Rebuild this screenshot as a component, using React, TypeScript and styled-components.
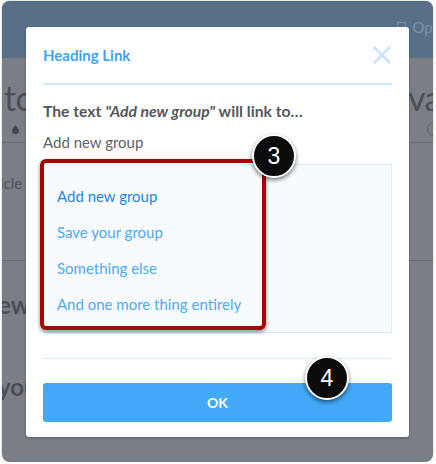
import React from "react";
import styled, { createGlobalStyle } from "styled-components";

const GlobalStyle = createGlobalStyle`
  html, body {
    margin: 0;
    padding: 0;
    background: #ffffff;
  }
  body {
    font-family: Lato, "Open Sans", sans-serif;
  }
`;

const Frame = styled.div`
  position: relative;
  margin: 1px 0 0 2px;
  width: 431px;
  height: 461px;
  border-radius: 8px;
  overflow: hidden;
  background: #7b7e87;
  box-shadow: 0 0 2px rgba(0, 0, 0, 0.35);
`;

const TopBar = styled.div`
  height: 57px;
  background: #577088;
  display: flex;
  justify-content: flex-end;
  align-items: flex-start;
  padding-top: 17px;
  box-sizing: border-box;
  color: #7a92a9;
  font-size: 15px;
  gap: 6px;
`;

const SquareIcon = styled.span`
  display: inline-block;
  width: 7px;
  height: 8px;
  margin-top: 4px;
  border: 1.5px solid #7a92a9;
  border-radius: 1px;
`;

const OpenText = styled.span`
  margin-right: -16px;
`;

const Page = styled.div`
  display: flex;
  flex-direction: column;
  color: #4b4e55;
`;

const TitleRow = styled.div`
  display: flex;
  justify-content: space-between;
  padding: 22px 0 0 0;
  font-size: 34px;
  line-height: 36px;
  letter-spacing: -0.5px;
`;

const TitleLeft = styled.span`
  margin-left: 2px;
`;

const TitleRight = styled.span`
  margin-right: -8px;
`;

const MetaRow = styled.div`
  display: flex;
  justify-content: space-between;
  align-items: center;
  height: 26px;
  padding: 0 0 0 10px;
  border-bottom: 1px solid #676a71;
`;

const ClockStub = styled.span`
  width: 12px;
  height: 12px;
  border: 1.5px solid #5f6269;
  border-radius: 50%;
  margin-right: -8px;
`;

const Section = styled.div<{ $h: number }>`
  height: ${(p) => p.$h}px;
  box-sizing: border-box;
  border-bottom: 1px solid #676a71;
  padding-top: 31px;
  font-size: 15px;
  color: #50535a;
`;

const Clipped = styled.span`
  margin-left: -2px;
`;

const BoldLine = styled.div<{ $top: number }>`
  margin-top: ${(p) => p.$top}px;
  font-size: 24px;
  font-weight: 700;
  line-height: 28px;
  margin-left: -4px;
`;

const Overlay = styled.div`
  position: absolute;
  left: 24px;
  top: 26px;
  width: 383px;
  background: #ffffff;
  border-radius: 3px;
  box-shadow: 0 1px 3px rgba(0, 0, 0, 0.25);
  padding: 0 17px 15px;
  box-sizing: border-box;
`;

const ModalHeader = styled.div`
  height: 58px;
  display: flex;
  align-items: center;
  justify-content: space-between;
  border-bottom: 2px solid #d3e9fc;
  box-sizing: border-box;
`;

const ModalTitle = styled.h2`
  margin: 0;
  font-size: 15px;
  font-weight: 700;
  color: #3fa3f3;
`;

const CloseBtn = styled.button`
  border: 0;
  background: none;
  padding: 0;
  width: 18px;
  height: 18px;
  display: flex;
  margin-right: 1px;
  cursor: pointer;
`;

const Prompt = styled.p`
  margin: 16px 0 0;
  font-size: 15.7px;
  line-height: 20px;
  font-weight: 700;
  color: #54575e;
`;

const Label = styled.div`
  margin-top: 11px;
  font-size: 15px;
  line-height: 20px;
  color: #5f6268;
`;

const ListBox = styled.ul`
  list-style: none;
  margin: 12px 0 0;
  padding: 13px 13px 12px;
  height: 169px;
  box-sizing: border-box;
  border: 1px solid #d8ecfc;
  border-radius: 2px;
  background: #f7fbfe;
`;

const Option = styled.li<{ $active?: boolean }>`
  height: 36px;
  line-height: 36px;
  font-size: 15px;
  color: ${(p) => (p.$active ? "#1c86e0" : "#4faaf4")};
`;

const Rule = styled.hr`
  margin: 25px 0 0;
  border: 0;
  border-top: 1px solid #d8ecfc;
`;

const OkButton = styled.button`
  margin-top: 24px;
  width: 100%;
  height: 39px;
  border: 0;
  border-radius: 3px;
  background: #42a8f8;
  color: #ffffff;
  font-family: Lato, "Open Sans", sans-serif;
  font-size: 14px;
  font-weight: 700;
  cursor: pointer;
`;

const Highlight = styled.div`
  position: absolute;
  left: 14px;
  top: 132px;
  width: 226px;
  height: 171px;
  box-sizing: border-box;
  border: 4px solid #a80202;
  border-radius: 6px;
  box-shadow: 0 2px 4px rgba(0, 0, 0, 0.45);
`;

const Badge = styled.div<{ $x: number; $y: number }>`
  position: absolute;
  left: ${(p) => p.$x}px;
  top: ${(p) => p.$y}px;
  width: 44px;
  height: 44px;
  box-sizing: border-box;
  border-radius: 50%;
  background: #0c0c0c;
  border: 2.5px solid #ffffff;
  box-shadow: 0 2px 4px rgba(0, 0, 0, 0.55);
  color: #ffffff;
  font-family: "Liberation Sans", Arial, sans-serif;
  font-size: 23px;
  display: flex;
  align-items: center;
  justify-content: center;
`;

const options = [
  "Add new group",
  "Save your group",
  "Something else",
  "And one more thing entirely",
];

const App = () => {
  return (
    <>
      <GlobalStyle />
      <Frame>
        <TopBar>
          <SquareIcon />
          <OpenText>Open</OpenText>
        </TopBar>
        <Page>
          <TitleRow>
            <TitleLeft>to</TitleLeft>
            <TitleRight>va</TitleRight>
          </TitleRow>
          <MetaRow>
            <svg width="7" height="10" viewBox="0 0 7 10">
              <path d="M3.5 0 C3.5 2 0 5 0 6.5 A3.5 3.5 0 0 0 7 6.5 C7 5 3.5 2 3.5 0 Z" fill="#44474e" />
            </svg>
            <ClockStub />
          </MetaRow>
          <Section $h={118}>
            <Clipped>icle</Clipped>
          </Section>
          <BoldLine $top={30}>ew</BoldLine>
          <BoldLine $top={54}>you</BoldLine>
        </Page>

        <Overlay>
          <ModalHeader>
            <ModalTitle>Heading Link</ModalTitle>
            <CloseBtn aria-label="Close">
              <svg width="18" height="18" viewBox="0 0 18 18">
                <path d="M2 2 L16 16 M16 2 L2 16" stroke="#cde5fa" strokeWidth="3" strokeLinecap="square" />
              </svg>
            </CloseBtn>
          </ModalHeader>
          <Prompt>
            The text <em>"Add new group"</em> will link to…
          </Prompt>
          <Label>Add new group</Label>
          <ListBox>
            {options.map((o, i) => (
              <Option key={o} $active={i === 0}>
                {o}
              </Option>
            ))}
          </ListBox>
          <Rule />
          <OkButton>OK</OkButton>
          <Highlight />
        </Overlay>

        <Badge $x={250} $y={133}>3</Badge>
        <Badge $x={303} $y={355}>4</Badge>
      </Frame>
    </>
  );
};

export default App;
